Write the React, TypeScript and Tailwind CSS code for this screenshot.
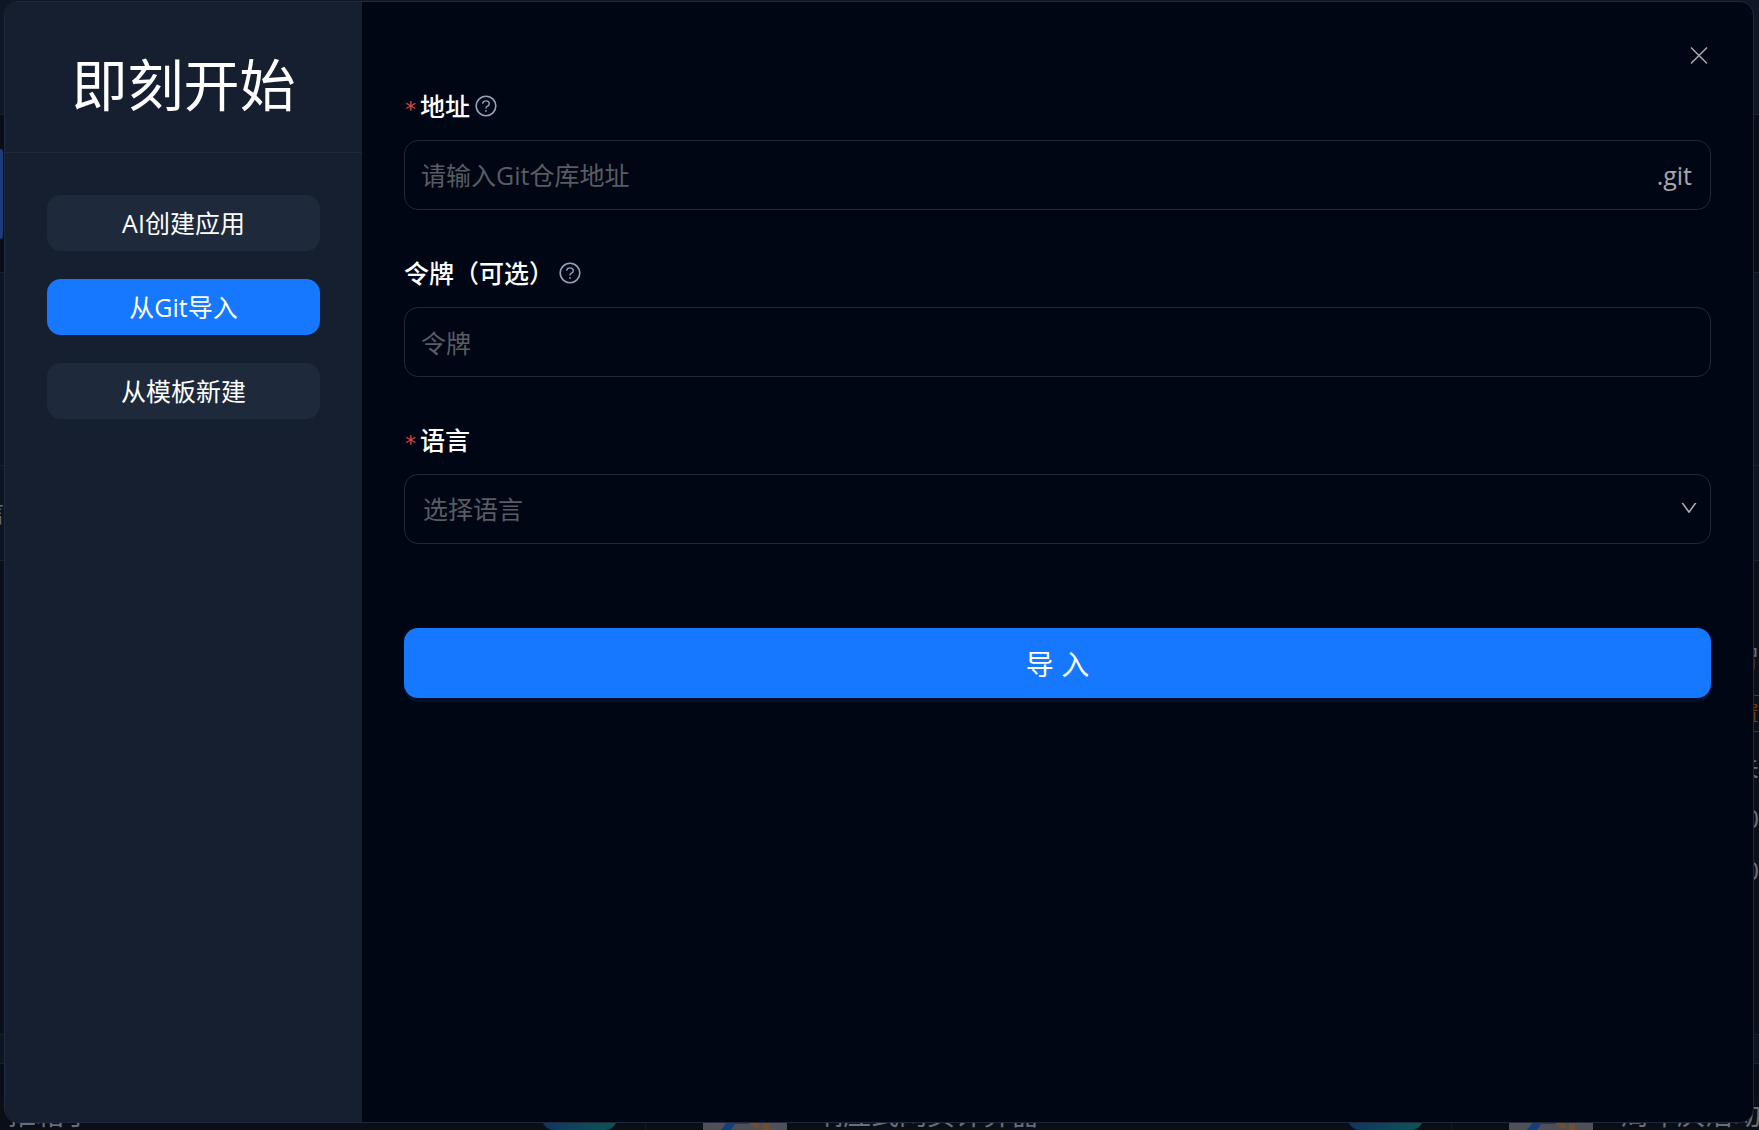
import { useState } from 'react';
import type { ReactNode } from 'react';
import { AiOutlineDown } from 'react-icons/ai';
import clsx from 'clsx';

const MODES = [
  { id: 'ai', label: 'AI创建应用' },
  { id: 'git', label: '从Git导入' },
  { id: 'template', label: '从模板新建' },
];

const LANGUAGES = ['JavaScript', 'TypeScript', 'Python', 'Go', 'Java'];

// ─── Icons ────────────────────────────────────────────────────────────────────

function CloseIcon() {
  return (
    <svg viewBox="0 0 28 28" className="size-7" fill="none" stroke="currentColor" strokeWidth="1.6" aria-hidden="true">
      <path d="M6 5.5 L22 21.5 M22 5.5 L6 21.5" />
    </svg>
  );
}

function HelpIcon() {
  return (
    <svg viewBox="0 0 24 24" className="size-6" fill="none" stroke="currentColor" aria-hidden="true">
      <circle cx="12" cy="12" r="9.8" strokeWidth="1.6" />
      <path d="M8.7 9.8 C8.7 7.9 10.1 6.9 12 6.9 C13.9 6.9 15.3 8 15.3 9.7 C15.3 11.1 14.4 11.8 13.2 12.3 C12.4 12.7 12 13.1 12 13.9 V14.6" strokeWidth="1.4" />
      <circle cx="12" cy="16.9" r="0.9" fill="currentColor" stroke="none" />
    </svg>
  );
}

// ─── Page behind the dialog ───────────────────────────────────────────────────

function AppThumb() {
  return (
    <svg viewBox="0 0 84 30" className="h-[30px] w-[84px] shrink-0 bg-[#505058]" aria-hidden="true">
      <path d="M18 30 L25 21 H50 V24 H32 L28 30Z" fill="#163f78" />
      <path d="M47 21 H56 V30 L47 24Z" fill="#73502d" />
      <path d="M60 21 H66 V30 H60Z" fill="#73502d" />
    </svg>
  );
}

function Backdrop() {
  return (
    <div className="absolute inset-0 flex flex-col overflow-hidden bg-[#080d18] text-[#6b6e75]" aria-hidden="true">
      <div className="h-[115px] shrink-0 border-b border-[#152030] bg-[#0f1726]" />
      <div className="flex h-[158px] shrink-0 items-start border-b border-[#152030] pt-[34px]">
        <div className="h-[90px] w-[3px] rounded-r-md bg-[#1d3c77]" />
      </div>
      <div className="h-[193px] shrink-0 border-b border-[#17202e] bg-[#0d1522]" />
      <div className="flex h-[95px] shrink-0 items-center border-b border-[#17202e] bg-[#0d1522]">
        <span className="w-1 overflow-hidden">
          <span className="float-right">信</span>
        </span>
      </div>
      <div className="flex grow flex-col items-end bg-[#0a0f19] pt-20 leading-8">
        <span className="w-[5px] overflow-hidden">
          <span className="float-right">智</span>
        </span>
        <span className="mt-[22px] h-[37px] w-[5px] overflow-hidden border-y border-[#5a3517] text-xl leading-9 text-[#6b3c14]">
          <span className="float-right">置</span>
        </span>
        <span className="mt-[18px] w-[5px] overflow-hidden">
          <span className="float-right">关</span>
        </span>
        <span className="mt-5 w-[5px] overflow-hidden">
          <span className="float-right">0</span>
        </span>
        <span className="mt-5 w-[5px] overflow-hidden">
          <span className="float-right">0</span>
        </span>
      </div>
      <div className="h-[30px] shrink-0 border-y border-[#152030] bg-[#0d1522]" />
      <div className="h-9 shrink-0" />
      <div className="flex h-[30px] shrink-0 bg-[#0a0e17] text-[28px] leading-[36px]">
        <div className="flex w-[645px] shrink-0 items-start justify-between pr-7 pl-2">
          <span className="-mt-1">推箱子</span>
          <span className="h-[30px] w-[75px] rounded-b-xl bg-linear-to-r from-[#12345f] to-[#0c5556]" />
        </div>
        <div className="flex w-[806px] shrink-0 items-start border-l border-[#151b26] pl-[57px]">
          <AppThumb />
          <span className="-mt-1 grow pl-7">响应式网页计算器</span>
          <span className="mr-7 h-[30px] w-[75px] rounded-b-xl bg-linear-to-r from-[#12345f] to-[#0c5556]" />
        </div>
        <div className="flex grow items-start overflow-hidden border-l border-[#151b26] pl-[57px] whitespace-nowrap">
          <AppThumb />
          <span className="-mt-1 pl-7">周年庆活动</span>
        </div>
      </div>
    </div>
  );
}

// ─── Form pieces ──────────────────────────────────────────────────────────────

interface FieldProps {
  id: string;
  label: string;
  required?: boolean;
  help?: boolean;
  children: ReactNode;
}

function Field({ id, label, required, help, children }: FieldProps) {
  return (
    <div className="flex flex-col gap-3.5">
      <div className="flex h-[39px] items-center">
        <label htmlFor={id} className="flex items-center font-medium text-white">
          {required && (
            <span className="w-4 pt-1.5 font-['DejaVu_Sans_Mono',monospace] text-[22px] font-normal text-[#dc4446]">*</span>
          )}
          {label}
        </label>
        {help && (
          <button type="button" aria-label={`${label} 说明`} className="ml-1 pb-0.5 text-[#94a3b8]">
            <HelpIcon />
          </button>
        )}
      </div>
      {children}
    </div>
  );
}

function ImportForm() {
  return (
    <form className="flex flex-col" onSubmit={(e) => e.preventDefault()}>
      <div className="flex flex-col gap-11">
        <Field id="repo" label="地址" required help>
          <div className="flex h-[70px] items-center rounded-[14px] border border-[#1e293b] pt-0.5 pr-[18px] pl-4">
            <input
              id="repo"
              type="text"
              placeholder="请输入Git仓库地址"
              className="min-w-0 grow bg-transparent text-white outline-none placeholder:text-[#595c63]"
            />
            <span className="text-[#a6a7ab]">.git</span>
          </div>
        </Field>
        <Field id="token" label="令牌（可选）" help>
          <input
            id="token"
            type="text"
            placeholder="令牌"
            className="h-[70px] w-full rounded-[14px] border border-[#1e293b] bg-transparent px-4 pt-0.5 text-white outline-none placeholder:text-[#595c63]"
          />
        </Field>
        <Field id="language" label="语言" required>
          <div className="relative">
            <select
              id="language"
              defaultValue=""
              className="h-[70px] w-full appearance-none rounded-[14px] border border-[#1e293b] bg-transparent px-[18px] pt-0.5 text-[#595c63] outline-none"
            >
              <option value="" disabled>选择语言</option>
              {LANGUAGES.map((lang) => (
                <option key={lang} value={lang}>{lang}</option>
              ))}
            </select>
            <AiOutlineDown className="pointer-events-none absolute top-6 right-3 size-5 text-[#b0b1b5]" />
          </div>
        </Field>
      </div>
      <button
        type="submit"
        className="mt-21 h-[70px] rounded-[14px] bg-[#1677ff] pt-0.5 text-[28px] text-white shadow-[0_4px_0_#020f2a]"
      >
        导 入
      </button>
    </form>
  );
}

// ─── Root ─────────────────────────────────────────────────────────────────────

export default function App() {
  const [mode, setMode] = useState('git');

  return (
    <div className="relative flex h-screen overflow-hidden pt-px pr-[5px] pb-[7px] pl-1 font-['Open_Sans','Noto_Sans_CJK_SC',sans-serif] text-[25px]">
      <Backdrop />
      <div
        role="dialog"
        aria-label="即刻开始"
        className="relative flex grow overflow-hidden rounded-[14px] border border-[#1e293b] bg-[#000614]"
      >
        <aside className="w-[357px] shrink-0 bg-[#161f2f]">
          <div className="flex h-[151px] items-center justify-center border-b border-[#1e293b] pt-3.5">
            <h1 className="text-[56px] leading-none text-white">即刻开始</h1>
          </div>
          <nav className="flex flex-col gap-7 p-[42px]">
            {MODES.map((item) => (
              <button
                key={item.id}
                type="button"
                onClick={() => setMode(item.id)}
                className={clsx(
                  'h-14 rounded-[14px] pt-0.5 text-white',
                  mode === item.id ? 'bg-[#1677ff]' : 'bg-[#1e293b]',
                )}
              >
                {item.label}
              </button>
            ))}
          </nav>
        </aside>
        <main className="min-w-0 grow px-[42px] pt-[85px]">
          <ImportForm />
        </main>
        <button
          type="button"
          aria-label="关闭"
          className="absolute top-10 right-10 text-[#a6a7ab]"
        >
          <CloseIcon />
        </button>
      </div>
    </div>
  );
}
